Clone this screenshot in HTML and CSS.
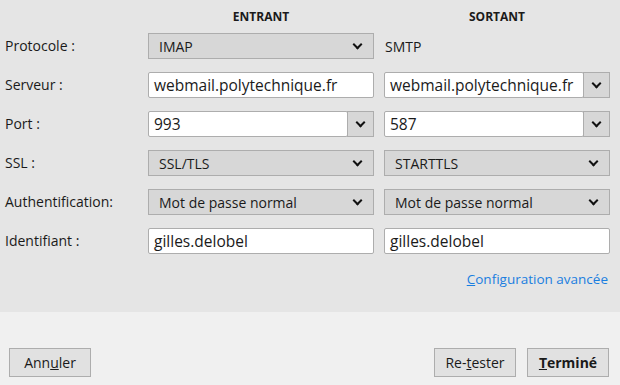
FILE: index.html
```html
<!DOCTYPE html>
<html lang="fr">

<head>
    <meta charset="UTF-8">
    <title>Configuration du compte</title>
    <link rel="stylesheet" href="styles.css">
</head>

<body>
    <div class="settings">
        <div class="grid">
            <div></div>
            <div class="col-head">ENTRANT</div>
            <div class="col-head">SORTANT</div>

            <div class="label">Protocole :</div>
            <div class="select">IMAP<span class="chev"></span></div>
            <div class="plain">SMTP</div>

            <div class="label">Serveur :</div>
            <div class="field">webmail.polytechnique.fr</div>
            <div class="combo">
                <div class="field">webmail.polytechnique.fr</div>
                <div class="drop"><span class="chev"></span></div>
            </div>

            <div class="label">Port :</div>
            <div class="combo">
                <div class="field">993</div>
                <div class="drop"><span class="chev"></span></div>
            </div>
            <div class="combo">
                <div class="field">587</div>
                <div class="drop"><span class="chev"></span></div>
            </div>

            <div class="label">SSL :</div>
            <div class="select">SSL/TLS<span class="chev"></span></div>
            <div class="select">STARTTLS<span class="chev"></span></div>

            <div class="label">Authentification:</div>
            <div class="select">Mot de passe normal<span class="chev"></span></div>
            <div class="select">Mot de passe normal<span class="chev"></span></div>

            <div class="label">Identifiant :</div>
            <div class="field">gilles.delobel</div>
            <div class="field">gilles.delobel</div>
        </div>
        <div class="advanced"><a href="#"><u>C</u>onfiguration avancée</a></div>
    </div>

    <div class="footer">
        <button class="btn">Ann<u>u</u>ler</button>
        <div class="right-buttons">
            <button class="btn">Re-<u>t</u>ester</button>
            <button class="btn primary"><u>T</u>erminé</button>
        </div>
    </div>
</body>

</html>
```

FILE: styles.css
```css
body {
    margin: 0;
    width: 620px;
    height: 385px;
    font-family: "Open Sans", "Noto Sans", sans-serif;
    font-size: 14px;
    color: #1a1a1a;
    background: #f0f0f0;
    overflow: hidden;
}

.settings {
    background: #e5e5e5;
    height: 312px;
    padding: 0 10px 0 5px;
    box-sizing: border-box;
}

.grid {
    display: grid;
    grid-template-columns: 133px 226px 226px;
    column-gap: 10px;
    row-gap: 13px;
    grid-template-rows: 20px repeat(6, 26px);
    align-items: center;
}

.grid > .col-head {
    font-size: 12px;
    font-weight: bold;
    text-align: center;
    align-self: start;
    line-height: 17px;
    padding-top: 8px;
}

.label {
    line-height: 26px;
}

.plain {
    padding-left: 1px;
}

.select,
.field,
.drop {
    height: 26px;
    box-sizing: border-box;
    border: 1px solid #adadad;
    display: flex;
    align-items: center;
}

.select {
    background: #d7d7d7;
    padding: 0 10px 0 10px;
    justify-content: space-between;
}

.field {
    background: #fff;
    border-radius: 2px;
    padding: 0 5px;
    flex: 1;
    font-size: 15.5px;
}

.combo {
    display: flex;
}

.drop {
    width: 27px;
    justify-content: center;
    background: #d7d7d7;
    margin-left: -1px;
}

.chev {
    width: 11px;
    height: 7px;
    position: relative;
}

.chev::before {
    content: "";
    position: absolute;
    left: 2px;
    top: -2px;
    width: 5px;
    height: 5px;
    border-right: 2.5px solid #111;
    border-bottom: 2.5px solid #111;
    transform: rotate(45deg);
}

.advanced {
    text-align: right;
    margin-top: 16px;
    padding-right: 2px;
    font-size: 13.5px;
}

.advanced a {
    color: #1a7ee0;
    text-decoration: none;
}

.footer {
    display: flex;
    justify-content: space-between;
    padding: 36px 11px 0 9px;
}

.right-buttons {
    display: flex;
    gap: 11px;
}

.btn {
    font-family: inherit;
    font-size: 14px;
    color: #1a1a1a;
    width: 82px;
    height: 29px;
    background: #e1e1e1;
    border: 1px solid #adadad;
    padding: 0;
}

.btn.primary {
    font-weight: bold;
}
```
